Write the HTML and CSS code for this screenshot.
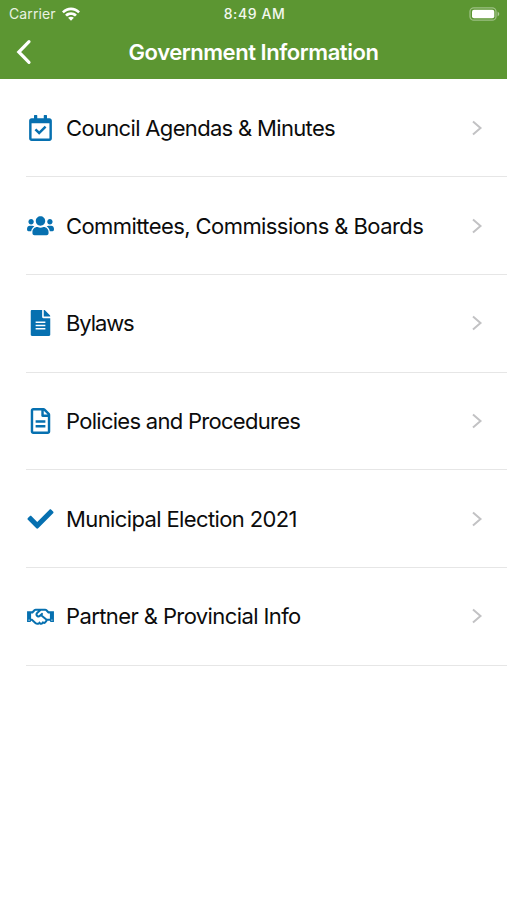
FILE: index.html
```html
<!DOCTYPE html>
<html lang="en">
<head>
<meta charset="utf-8">
<title>Government Information</title>
<link rel="stylesheet" href="styles.css">
</head>
<body>
<header class="header">
  <div class="status">
    <div class="carrier"><span>Carrier</span>
      <svg class="wifi" viewBox="0 0 18 14"><path d="M0 4.500C5 -.8 13 -.8 18 4.500L16.200 6.300C12 2.300 6 2.300 1.800 6.300Z"/><path d="M3.100 7.700C6.400 4.500 11.600 4.500 14.900 7.700L13 9.600C10.700 7.500 7.300 7.500 5 9.600Z"/><path d="M6.100 10.800C7.800 9.300 10.200 9.300 11.900 10.800L9 13.700Z"/></svg>
    </div>
    <span class="time">8:49 AM</span>
    <svg class="battery" viewBox="0 0 31 14"><rect x="1" y=".8" width="26" height="12.400" rx="3.800" fill="none" stroke="#fff" stroke-opacity=".4" stroke-width="1.300"/><rect x="3" y="2.700" width="22.300" height="8.600" rx="2" fill="#fff"/><path d="M28.600 4.600q3.400 2.400 0 4.800z" fill="#fff" fill-opacity=".5"/></svg>
  </div>
  <div class="nav">
    <svg class="back" viewBox="0 0 16 26"><path d="M13 2.700L2.800 13 13 23.300"/></svg>
    <h1>Government Information</h1>
  </div>
</header>
<main class="list">
  <a class="row">
    <svg class="icon" viewBox="0 0 448 512"><path d="M400 64h-48V12c0-7-5-12-12-12h-40c-7 0-12 5-12 12v52H160V12c0-7-5-12-12-12h-40c-7 0-12 5-12 12v52H48C21 64 0 85 0 112v352c0 27 21 48 48 48h352c27 0 48-21 48-48V112c0-27-21-48-48-48zm-6 400H54c-3 0-6-3-6-6V160h352v298c0 3-3 6-6 6zM341 248 198 390l-91-92 34-34 57 58 109-108z"/></svg>
    <span class="label council">Council Agendas &amp; Minutes</span>
    <svg class="chev" viewBox="0 0 12 16"><path d="M2 1.500 9.500 8 2 14.500"/></svg>
  </a>
  <a class="row">
    <svg class="icon wide" viewBox="0 0 640 512"><path d="M96 224c35.300 0 64-28.700 64-64s-28.700-64-64-64-64 28.700-64 64 28.700 64 64 64zm448 0c35.300 0 64-28.700 64-64s-28.700-64-64-64-64 28.700-64 64 28.700 64 64 64zm32 32h-64c-17.600 0-33.500 7.100-45.100 18.600 40.300 22.100 68.900 62 75.100 109.400h66c17.700 0 32-14.300 32-32v-32c0-35.300-28.700-64-64-64zm-256 0c61.900 0 112-50.100 112-112S381.900 32 320 32 208 82.100 208 144s50.100 112 112 112zm76.800 32h-8.300c-20.800 10-43.900 16-68.500 16s-47.600-6-68.500-16h-8.300C179.600 288 128 339.600 128 403.200V432c0 26.500 21.500 48 48 48h288c26.500 0 48-21.500 48-48v-28.800c0-63.600-51.600-115.200-115.200-115.200zm-223.700-13.400C161.500 263.100 145.600 256 128 256H64c-35.300 0-64 28.700-64 64v32c0 17.700 14.300 32 32 32h65.900c6.300-47.400 34.900-87.300 75.200-109.400z"/></svg>
    <span class="label committees">Committees, Commissions &amp; Boards</span>
    <svg class="chev" viewBox="0 0 12 16"><path d="M2 1.500 9.500 8 2 14.500"/></svg>
  </a>
  <a class="row">
    <svg class="icon" viewBox="0 0 384 512"><path fill-rule="evenodd" d="M224 136V0H24C10.700 0 0 10.700 0 24v464c0 13.300 10.700 24 24 24h336c13.300 0 24-10.700 24-24V160H248c-13.200 0-24-10.800-24-24zM96 352h192v32H96zM96 288h192v32H96zM96 224h192v32H96zM384 121.900v6.100H256V0h6.100c6.400 0 12.500 2.500 17 7l97.900 98c4.500 4.500 7 10.600 7 16.900z"/></svg>
    <span class="label bylaws">Bylaws</span>
    <svg class="chev" viewBox="0 0 12 16"><path d="M2 1.500 9.500 8 2 14.500"/></svg>
  </a>
  <a class="row">
    <svg class="icon" viewBox="0 0 384 512"><path fill-rule="evenodd" d="M369.900 98 286 14C277 5 264.800 0 252.100 0H48C21.500 0 0 21.500 0 48v416c0 26.500 21.500 48 48 48h288c26.500 0 48-21.500 48-48V131.900c0-12.700-5.100-25-14.100-33.900zM332.100 128H256V51.900zM48 464V48h160v104c0 13.300 10.700 24 24 24h104v288zM96 240h192v48H96zM96 336h192v48H96z"/></svg>
    <span class="label policies">Policies and Procedures</span>
    <svg class="chev" viewBox="0 0 12 16"><path d="M2 1.500 9.500 8 2 14.500"/></svg>
  </a>
  <a class="row">
    <svg class="icon" viewBox="0 0 512 512"><path d="M173.900 439.400 7.500 273c-10-10-10-26.200 0-36.200l36.200-36.200c10-10 26.200-10 36.200 0L192 312.700 432.100 72.600c10-10 26.200-10 36.200 0l36.200 36.200c10 10 10 26.200 0 36.200L210.100 439.400c-10 10-26.200 10-36.200 0z"/></svg>
    <span class="label election">Municipal Election 2021</span>
    <svg class="chev" viewBox="0 0 12 16"><path d="M2 1.500 9.500 8 2 14.500"/></svg>
  </a>
  <a class="row">
    <svg class="icon wide" viewBox="0 0 640 512"><path d="M519.200 127.900l-47.600-47.600A56.252 56.252 0 0 0 432 64H205.200c-14.800 0-29.100 5.900-39.600 16.300L118 127.900H0v255.700h64c17.600 0 31.800-14.200 31.900-31.700h9.100l84.600 76.400c30.900 25.100 73.800 25.700 105.600 3.800 12.500 10.800 26 15.900 41.100 15.900 18.200 0 35.300-7.400 48.800-24 22.100 8.700 48.200 2.600 64-16.800l26.200-32.300c5.600-6.900 9.100-14.800 10.900-23h57.900c.1 17.500 14.400 31.700 31.900 31.700h64V127.900H519.200zM48 351.600c-8.800 0-16-7.200-16-16s7.200-16 16-16 16 7.200 16 16c0 8.900-7.200 16-16 16zm390-6.900l-26.100 32.200c-2.800 3.400-7.800 4-11.300 1.200l-23.900-19.400-30 36.500c-6 7.300-15 4.800-18 2.400l-36.800-31.500-15.600 19.200c-13.900 17.100-39.200 19.700-55.300 6.600l-97.300-88H96V175.800h41.900l61.700-61.600c2-.8 3.700-1.500 5.700-2.300H262l-38.700 35.500c-29.400 26.900-31.100 72.300-4.400 101.300 14.800 16.200 61.200 41.200 101.500 4.400l8.200-7.500 108.200 87.800c3.400 2.800 3.900 7.900 1.200 11.300zm106-40.800h-69.200c-2.300-2.800-4.900-5.400-7.700-7.700l-102.700-83.400 12.500-11.400c6.500-6 7-16.100 1-22.600L367 167.100c-6-6.500-16.100-6.900-22.600-1l-55.200 50.600c-9.500 8.700-25.700 9.400-34.600 0-9.300-9.900-8.500-25.100 1.200-33.900l65.600-60.200c7.400-6.800 17-10.500 27-10.500l83.700-.2c2.100 0 4.100.8 5.500 2.300l61.700 61.600H544v128zm48 47.700c-8.800 0-16-7.200-16-16s7.200-16 16-16 16 7.200 16 16c0 8.900-7.200 16-16 16z"/></svg>
    <span class="label partner">Partner &amp; Provincial Info</span>
    <svg class="chev" viewBox="0 0 12 16"><path d="M2 1.500 9.500 8 2 14.500"/></svg>
  </a>
</main>
</body>
</html>
```
FILE: styles.css
```css
* { box-sizing: border-box; }
body {
  margin: 0;
  font-family: Inter, "Liberation Sans", sans-serif;
  background: #fff;
  color: #0c0c0c;
}
.header {
  background: #5c9632;
  color: #fff;
  height: 79px;
}
.status {
  display: grid;
  grid-template-columns: 1fr auto 1fr;
  align-items: center;
  height: 27px;
  padding: 0 7px 0 9px;
  font-size: 14px;
}
.carrier { display: flex; align-items: center; gap: 6px; color: #e9f2e2; letter-spacing: .1px; }
.wifi { width: 18px; height: 14px; fill: #fff; }
.time { font-weight: 500; letter-spacing: .6px; color: #f3f8ef; }
.battery { width: 31px; height: 14px; justify-self: end; }
.nav {
  display: grid;
  grid-template-columns: 32px 1fr 32px;
  align-items: center;
  height: 50px;
}
.back {
  width: 16px;
  height: 26px;
  margin-left: 15.500px;
  fill: none;
  stroke: #fff;
  stroke-width: 3.2;
  stroke-linecap: round;
}
h1 {
  margin: 0;
  font-size: 22px;
  font-weight: 600;
  letter-spacing: -.45px;
  text-align: center;
  white-space: nowrap;
}
.list { padding-top: .6px; }
.row {
  display: grid;
  grid-template-columns: 27px 1fr 12px;
  column-gap: 12px;
  align-items: center;
  height: 97.7px;
  margin-left: 26px;
  padding: 0 24px 0 1px;
  border-bottom: 1px solid #e6e6e6;
}
.icon { width: 27px; height: 26px; fill: #0670b0; }
.icon.wide { height: 21.500px; }
.label { font-size: 22px; white-space: nowrap; }
.council { letter-spacing: -.67px; }
.committees { letter-spacing: -.58px; }
.bylaws { letter-spacing: -1.1px; }
.policies { letter-spacing: -.72px; }
.election { letter-spacing: -.62px; }
.partner { letter-spacing: -.6px; }
.chev {
  width: 12px;
  height: 16px;
  fill: none;
  stroke: #c2c2c4;
  stroke-width: 2;
}
```
